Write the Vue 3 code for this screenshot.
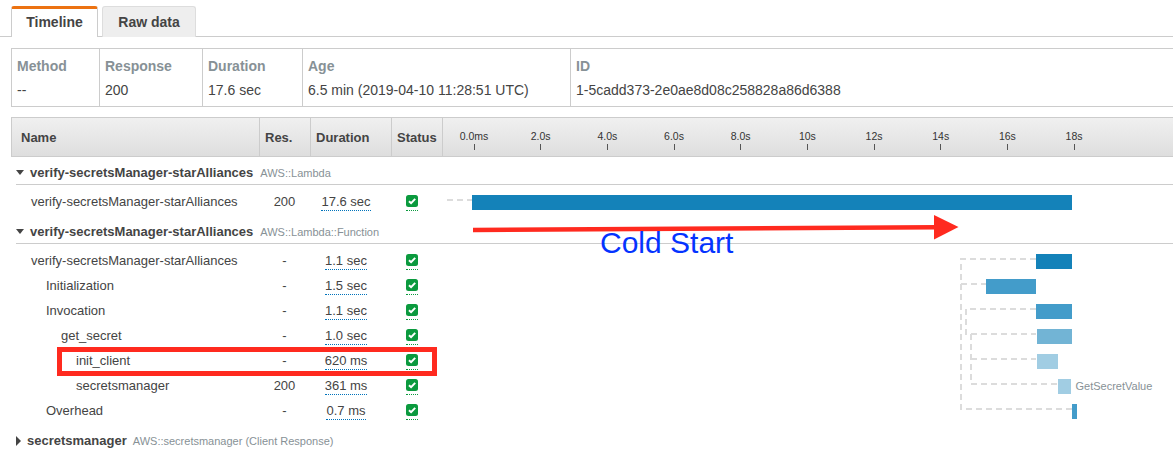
<template>
  <div class="page">
    <!-- TABS -->
    <div class="tabs">
      <div class="tab active">Timeline</div>
      <div class="tab">Raw data</div>
    </div>

    <!-- SUMMARY -->
    <div class="info">
      <div v-for="cell in info" :key="cell.label" class="info-cell">
        <div class="info-label">{{ cell.label }}</div>
        <div class="info-value">{{ cell.value }}</div>
      </div>
    </div>

    <!-- HEADER -->
    <div class="head">
      <div class="head-cell">Name</div>
      <div class="head-cell">Res.</div>
      <div class="head-cell">Duration</div>
      <div class="head-cell">Status</div>
      <div class="head-axis">
        <div v-for="t in ticks" :key="t.label" class="tick" :style="{ left: t.x + 'px' }">
          <span>{{ t.label }}</span>
          <i></i>
        </div>
      </div>
    </div>

    <!-- TRACE -->
    <div class="trace">
      <template v-for="group in groups" :key="group.title + group.type">
        <div class="group" :class="{ closed: !group.rows.length }">
          <span class="caret"></span>
          <b>{{ group.title }}</b>
          <small>{{ group.type }}</small>
        </div>
        <div v-for="row in group.rows" :key="row.name + row.dur" class="row">
          <div class="name" :style="{ paddingLeft: 31 + row.depth * 15 + 'px' }">{{ row.name }}</div>
          <div class="res">{{ row.res }}</div>
          <div class="dur"><span>{{ row.dur }}</span></div>
          <div class="status">
            <span class="check">
              <svg width="12" height="12" viewBox="0 0 12 12">
                <rect width="12" height="12" rx="2.5" fill="#0b9a3e" />
                <path d="M3 6.2 L5.1 8.2 L9.2 3.9" fill="none" stroke="#fff" stroke-width="2" />
              </svg>
            </span>
          </div>
          <div class="lane">
            <div
              class="bar"
              :style="{ left: row.x + 'px', width: row.w + 'px', background: row.color }"
            ></div>
            <span v-if="row.note" class="note" :style="{ left: row.x + row.w + 5 + 'px' }">{{ row.note }}</span>
          </div>
        </div>
      </template>

      <!-- connector lines -->
      <svg class="links" width="1173" height="293" viewBox="0 157 1173 293">
        <path
          d="M447 200H472 M1036 259H961V409H1072 M961 284H986 M1036 309H966V334H1036 M971 334V384H1058 M971 359H1036"
          fill="none"
          stroke="#dcdcdc"
          stroke-width="2"
          stroke-dasharray="6 4"
        />
      </svg>
    </div>

    <!-- annotations drawn on top of the screenshot -->
    <svg class="arrow" width="1173" height="450" viewBox="0 0 1173 450">
      <path d="M473 230 L936 227.3" stroke="#ff2a1f" stroke-width="4.5" fill="none" />
      <path d="M934 215 L958.5 227 L934 239.5 Z" fill="#ff2a1f" />
    </svg>
    <div class="cold">Cold Start</div>
    <div class="redbox"></div>
  </div>
</template>

<script setup>
const info = [
  { label: 'Method', value: '--' },
  { label: 'Response', value: '200' },
  { label: 'Duration', value: '17.6 sec' },
  { label: 'Age', value: '6.5 min (2019-04-10 11:28:51 UTC)' },
  { label: 'ID', value: '1-5cadd373-2e0ae8d08c258828a86d6388' }
]

const tickLabels = ['0.0ms', '2.0s', '4.0s', '6.0s', '8.0s', '10s', '12s', '14s', '16s', '18s']
const ticks = tickLabels.map((label, i) => ({ label, x: 31 + i * 66.67 }))

// x is measured from the left edge of the timeline column (442px)
const groups = [
  {
    title: 'verify-secretsManager-starAlliances',
    type: 'AWS::Lambda',
    rows: [
      { name: 'verify-secretsManager-starAlliances', depth: 0, res: '200', dur: '17.6 sec', x: 30, w: 600, color: '#1482b9' }
    ]
  },
  {
    title: 'verify-secretsManager-starAlliances',
    type: 'AWS::Lambda::Function',
    rows: [
      { name: 'verify-secretsManager-starAlliances', depth: 0, res: '-', dur: '1.1 sec', x: 594, w: 36, color: '#1482b9' },
      { name: 'Initialization', depth: 1, res: '-', dur: '1.5 sec', x: 544, w: 50, color: '#439cca' },
      { name: 'Invocation', depth: 1, res: '-', dur: '1.1 sec', x: 594, w: 36, color: '#439cca' },
      { name: 'get_secret', depth: 2, res: '-', dur: '1.0 sec', x: 594.5, w: 35, color: '#72b4d5' },
      { name: 'init_client', depth: 3, res: '-', dur: '620 ms', x: 594.5, w: 21.5, color: '#a1cde3' },
      { name: 'secretsmanager', depth: 3, res: '200', dur: '361 ms', x: 616, w: 12.5, color: '#a1cde3', note: 'GetSecretValue' },
      { name: 'Overhead', depth: 1, res: '-', dur: '0.7 ms', x: 630, w: 5, color: '#439cca' }
    ]
  },
  {
    title: 'secretsmanager',
    type: 'AWS::secretsmanager (Client Response)',
    rows: []
  }
]
</script>

<style>
html,
body {
  overflow: hidden;
  background: #fff;
}
</style>

<style scoped>
.page {
  position: relative;
  width: 1173px;
  height: 450px;
  overflow: hidden;
  font-family: "Liberation Sans", Arial, sans-serif;
  font-size: 13px;
  color: #444;
}

/* ===== tabs ===== */
.tabs {
  display: flex;
  gap: 4px;
  height: 37px;
  box-sizing: border-box;
  padding: 6px 0 0 11px;
  border-bottom: 1px solid #ccc;
}

.tab {
  box-sizing: border-box;
  width: 94px;
  height: 31px;
  padding-top: 7px;
  text-align: center;
  font-size: 14px;
  font-weight: bold;
  background: #eee;
  border: 1px solid #ddd;
  border-bottom: none;
  border-radius: 3px 3px 0 0;
}

.tab.active {
  width: 87px;
  background: #fff;
  border-color: #ccc;
  border-top: 3px solid #ec7211;
  padding-top: 5px;
}

/* ===== summary ===== */
.info {
  display: grid;
  grid-template-columns: 88px 103px 100px 268px 1fr;
  height: 59px;
  box-sizing: border-box;
  margin: 11px 0 0 11px;
  border: 1px solid #ccc;
  border-right: none;
}

.info-cell {
  padding: 9px 5px 0 5px;
  border-right: 1px solid #ccc;
}

.info-cell:last-child {
  border-right: none;
}

.info-label {
  font-size: 14px;
  font-weight: bold;
  color: #879196;
  line-height: 16px;
}

.info-value {
  margin-top: 8px;
  font-size: 14px;
  line-height: 16px;
}

/* ===== table head ===== */
.head {
  display: grid;
  grid-template-columns: 248px 51px 81px 51px 1fr;
  height: 40px;
  box-sizing: border-box;
  margin: 10px 0 0 11px;
  background: linear-gradient(#f0f0f0, #dedede);
  border-top: 1px solid #ccc;
  border-bottom: 1px solid #ccc;
  border-left: 1px solid #ccc;
}

.head-cell {
  padding-left: 5px;
  line-height: 40px;
  height: 38px;
  font-weight: bold;
  border-right: 1px solid #ccc;
}

.head-cell:first-child {
  padding-left: 9px;
}

.head-axis {
  position: relative;
}

.tick {
  position: absolute;
  top: 0;
  width: 0;
}

.tick span {
  position: absolute;
  top: 12px;
  left: -25px;
  width: 50px;
  text-align: center;
  font-size: 10.5px;
  line-height: 12px;
  color: #333;
}

.tick i {
  position: absolute;
  top: 26px;
  left: -0.5px;
  width: 1px;
  height: 6px;
  background: #555;
}

/* ===== trace ===== */
.trace {
  position: relative;
  padding-top: 3px;
}

.group {
  display: flex;
  align-items: baseline;
  height: 25px;
  box-sizing: border-box;
  margin: 5px 0 4px 16px;
  padding: 5px 0 0 14px;
  border-bottom: 1px solid #ccc;
  position: relative;
}

.group:first-child {
  margin-top: 0;
}

.group.closed {
  border-bottom: none;
  padding-left: 11px;
}

.group b {
  font-size: 13px;
}

.group small {
  margin-left: 7px;
  font-size: 11px;
  color: #879196;
}

.closed small {
  margin-left: 6px;
}

.caret {
  position: absolute;
  left: 0;
  top: 10px;
  border-style: solid;
  border-width: 5px 4.5px 0 4.5px;
  border-color: #444 transparent transparent transparent;
}

.closed .caret {
  top: 8px;
  border-width: 5px 0 5px 5px;
  border-color: transparent transparent transparent #444;
}

.row {
  display: grid;
  grid-template-columns: 259px 51px 81px 51px 1fr;
  height: 25px;
  line-height: 25px;
}

.row > .name {
  white-space: nowrap;
}

.res {
  text-align: center;
}

.dur {
  padding-right: 9px;
  text-align: center;
}

.dur span {
  display: inline-block;
  line-height: 16px;
  border-bottom: 1px dotted #0073bb;
}

.status {
  padding-left: 15px;
}

.check {
  display: inline-block;
  height: 15px;
  line-height: 0;
  vertical-align: top;
  margin-top: 6px;
  border-bottom: 1px dotted #0b9a3e;
}

.lane {
  position: relative;
}

.bar {
  position: absolute;
  top: 6px;
  height: 15px;
}

.note {
  position: absolute;
  top: 1px;
  font-size: 11px;
  line-height: 25px;
  color: #879196;
}

.links {
  position: absolute;
  top: 0;
  left: 0;
  pointer-events: none;
}

/* ===== annotations ===== */
.arrow {
  position: absolute;
  top: 0;
  left: 0;
  pointer-events: none;
}

.cold {
  position: absolute;
  left: 600px;
  top: 226px;
  font-size: 30px;
  line-height: 34px;
  color: #0433ff;
}

.redbox {
  position: absolute;
  left: 57px;
  top: 347px;
  width: 380px;
  height: 29px;
  box-sizing: border-box;
  border: 5px solid #ff2a1f;
}
</style>
